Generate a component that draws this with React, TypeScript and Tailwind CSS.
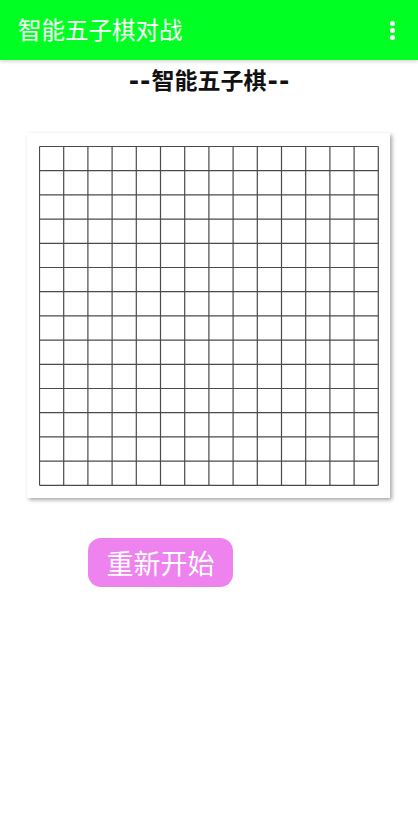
import React from "react";

const CELLS = 14;
const CELL = 24.2;
const SIZE = CELLS * CELL;

function Board() {
	const lines = [];
	for (let i = 0; i <= CELLS; i++) {
		const p = i * CELL + 0.5;
		lines.push(<line key={"h" + i} x1={0.5} y1={p} x2={SIZE + 0.5} y2={p} />);
		lines.push(<line key={"v" + i} x1={p} y1={0.5} x2={p} y2={SIZE + 0.5} />);
	}
	return (
		<svg width={SIZE + 1} height={SIZE + 1} className="block">
			<g stroke="#4a4a4a" strokeWidth={1.2}>
				{lines}
			</g>
		</svg>
	);
}

export default function App() {
	return (
		<div
			className="w-[418px] h-[831px] bg-white flex flex-col"
			style={{ fontFamily: '"Noto Sans CJK SC", "Noto Sans", sans-serif' }}
		>
			{/* app bar */}
			<div className="h-[60px] bg-[#00ff22] flex items-center justify-between pl-[18px] pr-[23px] shadow-[0_2px_3px_rgba(0,0,0,0.15)]">
				<span className="text-white text-[23.5px] leading-none">智能五子棋对战</span>
				<div className="flex flex-col items-center gap-[2px] w-[5px]">
					<span className="w-[5px] h-[5px] rounded-full bg-white" />
					<span className="w-[5px] h-[5px] rounded-full bg-white" />
					<span className="w-[5px] h-[5px] rounded-full bg-white" />
				</div>
			</div>

			<div className="h-[25px] text-center font-bold text-[23px] leading-none text-[#111] mt-[8px]">
				<span className="font-['DejaVu_Sans',sans-serif] text-[25px] tracking-[1px]">--</span>
				智能五子棋
				<span className="font-['DejaVu_Sans',sans-serif] text-[25px] tracking-[1px] ml-[1px] -mr-[1px]">--</span>
			</div>

			<div className="ml-[27px] mt-[40px] w-[363px] h-[365px] bg-white shadow-[2px_2px_4px_rgba(0,0,0,0.35)] flex items-start pl-[12px] pt-[13px]">
				<Board />
			</div>

			<button className="ml-[88px] mt-[40px] w-[145px] h-[49px] rounded-[13px] bg-[#ee82ee] text-white text-[27px] leading-none flex items-center justify-center">
				重新开始
			</button>
		</div>
	);
}
